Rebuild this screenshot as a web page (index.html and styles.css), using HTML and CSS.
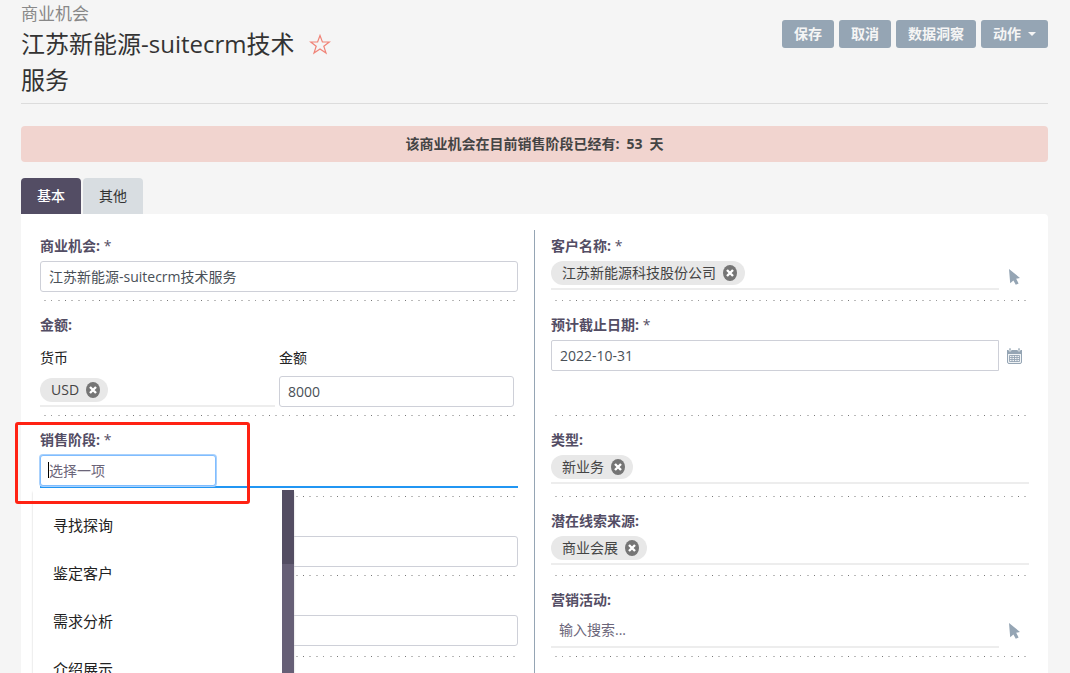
FILE: index.html
```html
<!DOCTYPE html>
<html lang="zh-CN">
<head>
<meta charset="utf-8">
<title>商业机会</title>
<link rel="stylesheet" href="styles.css">
</head>
<body>
<svg class="defs" aria-hidden="true">
  <symbol id="remove" viewBox="0 0 14 16"><ellipse cx="7" cy="8" rx="7" ry="8" fill="#757575"/><path d="M4 5l6 6M10 5l-6 6" stroke="#fff" stroke-width="2.400"/></symbol>
  <symbol id="pointer" viewBox="0 0 11 16"><path d="M0 0L11 9L7.200 9.700L9.600 14.400L6.800 15.800L4.400 11.400L1.200 14.200z" fill="#95a5b4"/></symbol>
  <symbol id="calendar" viewBox="0 0 15 16"><rect x=".5" y="2.500" width="14" height="13" rx="1.500" fill="#f0f3f5" stroke="#95a5b4"/><path d="M0 2h15v4H0z" fill="#95a5b4"/><path d="M2 0h2v3H2zM11 0h2v3h-2z" fill="#95a5b4" stroke="#fff" stroke-width=".6"/><path d="M2.500 7.500h10v6h-10zM2.500 9.500h10M2.500 11.500h10M5 7v7M7.500 7v7M10 7v7" fill="none" stroke="#95a5b4" stroke-width=".9"/></symbol>
</svg>
<div class="page">
  <header class="header">
    <div class="heading">
      <p class="module">商业机会</p>
      <div class="title-row">
        <h1 class="title">江苏新能源-suitecrm技术服务</h1>
        <button class="star" type="button" aria-label="收藏"><svg width="22" height="21" viewBox="0 0 22 21"><path d="M11 1.500L13.400 8H20.300L14.800 12.200L17 19L11 15L5 19L7.200 12.200L1.700 8H8.600z" fill="none" stroke="#f08377" stroke-width="1.200"/></svg></button>
      </div>
    </div>
    <div class="actions">
      <button class="btn" type="button">保存</button>
      <button class="btn" type="button">取消</button>
      <button class="btn" type="button">数据洞察</button>
      <button class="btn btn-menu" type="button">动作<span class="caret"></span></button>
    </div>
  </header>

  <div class="alert"><span>该商业机会在目前销售阶段已经有:</span><span>53</span><span>天</span></div>

  <nav class="tabs">
    <button class="tab tab-active" type="button">基本</button>
    <button class="tab" type="button">其他</button>
  </nav>

  <form class="panel">
    <div class="column">
      <div class="field">
        <label class="label" for="name">商业机会: <span class="required">*</span></label>
        <input class="input" id="name" type="text" value="江苏新能源-suitecrm技术服务">
      </div>
      <div class="field">
        <span class="label">金额:</span>
        <div class="money">
          <div>
            <span class="sublabel">货币</span>
            <div class="picker picker-tall"><span class="chip">USD<button class="remove" type="button" aria-label="移除 USD"><svg width="14" height="16"><use href="#remove"/></svg></button></span></div>
          </div>
          <div>
            <label class="sublabel" for="amount">金额</label>
            <input class="input" id="amount" type="text" value="8000">
          </div>
        </div>
      </div>
      <div class="field field-stage">
        <label class="label" for="stage">销售阶段: <span class="required">*</span></label>
        <div class="stage">
          <input class="input input-focus" id="stage" type="text" placeholder="选择一项">
          <span class="text-cursor"></span>
        </div>
        <div class="menu">
          <ul class="options" role="listbox">
            <li class="option" role="option">寻找探询</li>
            <li class="option" role="option">鉴定客户</li>
            <li class="option" role="option">需求分析</li>
            <li class="option" role="option">介绍展示</li>
          </ul>
          <div class="scrollbar"><div class="thumb"></div></div>
        </div>
        <div class="highlight"></div>
      </div>
      <div class="field"><span class="label"></span><input class="input" type="text"></div>
      <div class="field"><span class="label"></span><input class="input" type="text"></div>
    </div>

    <div class="column column-right">
      <div class="field">
        <span class="label">客户名称: <span class="required">*</span></span>
        <div class="control">
          <div class="picker"><span class="chip">江苏新能源科技股份公司<button class="remove" type="button" aria-label="移除客户"><svg width="14" height="16"><use href="#remove"/></svg></button></span></div>
          <button class="icon" type="button" aria-label="选择客户"><svg width="11" height="16"><use href="#pointer"/></svg></button>
        </div>
      </div>
      <div class="field">
        <label class="label" for="close">预计截止日期: <span class="required">*</span></label>
        <div class="control">
          <input class="input input-square" id="close" type="text" value="2022-10-31">
          <button class="icon" type="button" aria-label="选择日期"><svg width="15" height="16"><use href="#calendar"/></svg></button>
        </div>
      </div>
      <div class="field">
        <span class="label">类型:</span>
        <div class="picker"><span class="chip">新业务<button class="remove" type="button" aria-label="移除新业务"><svg width="14" height="16"><use href="#remove"/></svg></button></span></div>
      </div>
      <div class="field">
        <span class="label">潜在线索来源:</span>
        <div class="picker"><span class="chip">商业会展<button class="remove" type="button" aria-label="移除商业会展"><svg width="14" height="16"><use href="#remove"/></svg></button></span></div>
      </div>
      <div class="field">
        <label class="label" for="campaign">营销活动:</label>
        <div class="control">
          <input class="search" id="campaign" type="text" placeholder="输入搜索...">
          <button class="icon" type="button" aria-label="选择营销活动"><svg width="11" height="16"><use href="#pointer"/></svg></button>
        </div>
      </div>
    </div>
  </form>
</div>
</body>
</html>
```
FILE: styles.css
```css
* { box-sizing: border-box; }

body {
  margin: 0;
  background: #f5f5f5;
  color: #534d64;
  font: 14px/20px "Open Sans", "Noto Sans CJK SC", sans-serif;
}

button, input { font: inherit; color: inherit; }
button { padding: 0; border: 0; background: none; }
svg { display: block; }
.defs { position: absolute; width: 0; height: 0; }

.page {
  display: flex;
  flex-direction: column;
  height: 100vh;
  overflow: hidden;
  padding: 0 22px 0 21px;
}

.header {
  display: flex;
  flex: none;
  justify-content: space-between;
  align-items: flex-start;
  padding-bottom: 5px;
  border-bottom: 1px solid #dcdcdc;
}
.module { margin: 0; padding-top: 2px; color: #888; font-size: 17px; line-height: 24px; }
.title-row { display: flex; align-items: flex-start; gap: 6px; }
.title { width: 282px; margin: 0; color: #333; font-size: 24px; font-weight: 400; line-height: 36px; }
.star { margin-top: 8px; }

.actions { display: flex; gap: 5px; padding-top: 20px; }
.btn {
  height: 28px;
  padding: 0 12px;
  border-radius: 3px;
  background: #95a5b4;
  color: #f5f5f5;
  font-weight: 700;
}
.btn-menu { display: flex; align-items: center; gap: 7px; }
.caret { border: 4px solid transparent; border-top-color: #f5f5f5; border-bottom: 0; }

.alert {
  display: flex;
  flex: none;
  justify-content: center;
  gap: 7px;
  margin: 22px 0 16px;
  padding: 8px;
  border-radius: 4px;
  background: #f1d4cf;
  color: #444;
  font-weight: 700;
}

.tabs { display: flex; flex: none; gap: 2px; }
.tab { height: 36px; padding: 0 16px; border-radius: 4px 4px 0 0; background: #d8dde1; color: #333; }
.tab-active { background: #534d64; color: #fff; font-weight: 500; }

.panel {
  display: flex;
  flex: 1;
  min-height: 0;
  padding: 0 19px;
  border-radius: 0 4px 0 0;
  background: #fff;
}
.column {
  display: grid;
  flex: 1;
  grid-template-rows: 79px 115px 81px 79px 81px;
  min-width: 0;
  padding: 8px 16px 0 0;
}
.column-right {
  grid-template-rows: 71px 115px 81px 79px 81px;
  margin-top: 16px;
  padding: 0 0 0 16px;
  border-left: 1px solid #95a5b4;
}
.column-right .field:first-child { margin-top: -8px; }

.field { position: relative; padding-top: 14px; }
.field::after {
  content: "";
  position: absolute;
  right: 2px;
  bottom: 0;
  left: 4px;
  height: 1px;
  background: linear-gradient(90deg,
    #bbb 0 2px, transparent 2px 7px, #999 7px 8px, transparent 8px 14px,
    #bbb 14px 16px, transparent 16px 21px, #777 21px 22px, transparent 22px 27px,
    #bbb 27px 29px, transparent 29px) 0 0 / 34px 1px;
}
.label { display: block; height: 20px; margin-bottom: 5px; font-weight: 700; }
.required { font-weight: 400; }
.sublabel { display: block; margin-bottom: 8px; color: #222; }

.input {
  display: block;
  width: 100%;
  height: 31px;
  padding: 0 8px 1px;
  border: 1px solid #ced0d8;
  border-radius: 3px;
  background: #fff;
  color: #495057;
}
.input-square { border-radius: 2px 0 0 2px; }
.money { display: grid; grid-template-columns: 1fr 1fr; gap: 4px; margin-top: 13px; padding-right: 4px; }

.picker { flex: 1; padding-bottom: 3px; border-bottom: 2px solid #ededed; }
.picker-tall { padding-top: 2px; }
.chip {
  display: flex;
  align-items: center;
  gap: 7px;
  width: max-content;
  height: 24px;
  padding: 0 8px 0 11px;
  border-radius: 12px;
  background: #e8e8e8;
  color: #444;
}

.control { display: flex; align-items: flex-start; }
.icon { display: flex; flex: none; justify-content: center; width: 30px; padding-top: 8px; }
.search {
  flex: 1;
  min-width: 0;
  height: 33px;
  padding: 0 8px 2px;
  border: 0;
  border-bottom: 2px solid #ededed;
  border-radius: 0;
}
::placeholder { color: #6b6579; opacity: 1; }

.field-stage { z-index: 1; }
.stage { position: relative; border-bottom: 2px solid #2196f3; }
.input-focus { width: 176px; border-color: #80bdff; box-shadow: 0 0 0 1px #a9d1fc; outline: 0; }
.text-cursor { position: absolute; top: 7px; left: 8px; width: 1px; height: 16px; background: #000; }

.menu {
  position: absolute;
  z-index: 1;
  top: 74px;
  left: -7px;
  display: flex;
  width: 261px;
  background: #fff;
  box-shadow: 0 2px 2px #ccc;
}
.options { flex: 1; margin: 0; padding: 11px 20px; list-style: none; }
.option { color: #222; font-size: 15px; line-height: 48px; }
.scrollbar { width: 12px; background: #665f76; }
.thumb { height: 74px; background: #534d62; }

.highlight {
  position: absolute;
  z-index: 2;
  top: 6px;
  left: -25px;
  width: 235px;
  height: 82px;
  border: 3px solid #ff2213;
  border-radius: 3px;
  pointer-events: none;
}
```
